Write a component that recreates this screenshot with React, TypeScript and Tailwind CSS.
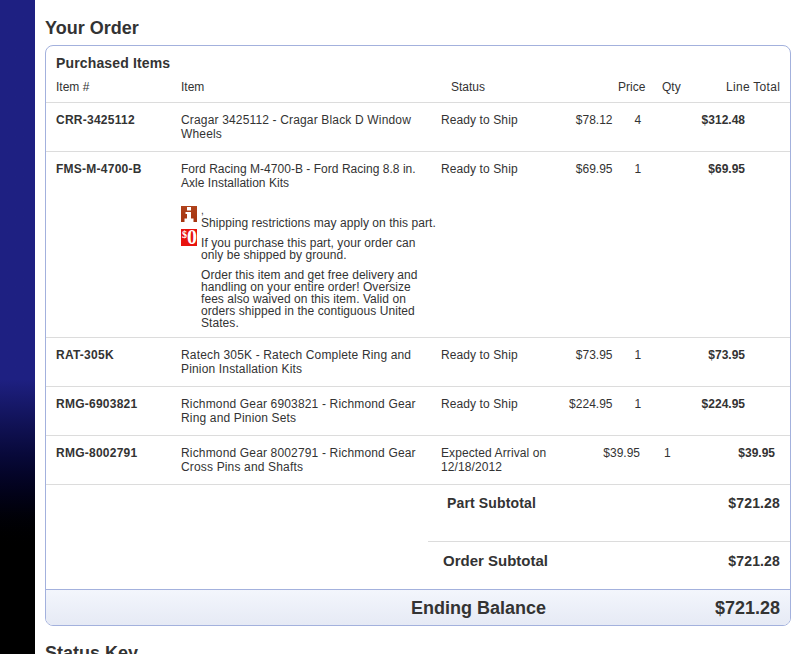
const font = { fontFamily: '"Liberation Sans", Arial, sans-serif' };

interface Item {
  sku: string;
  name: string[];
  status: string[];
  price: string;
  qty: string;
  total: string;
  late?: boolean;
}

const items: Item[] = [
  {
    sku: "CRR-3425112",
    name: ["Cragar 3425112 - Cragar Black D Window", "Wheels"],
    status: ["Ready to Ship"],
    price: "$78.12",
    qty: "4",
    total: "$312.48",
  },
  {
    sku: "FMS-M-4700-B",
    name: ["Ford Racing M-4700-B - Ford Racing 8.8 in.", "Axle Installation Kits"],
    status: ["Ready to Ship"],
    price: "$69.95",
    qty: "1",
    total: "$69.95",
  },
  {
    sku: "RAT-305K",
    name: ["Ratech 305K - Ratech Complete Ring and", "Pinion Installation Kits"],
    status: ["Ready to Ship"],
    price: "$73.95",
    qty: "1",
    total: "$73.95",
  },
  {
    sku: "RMG-6903821",
    name: ["Richmond Gear 6903821 - Richmond Gear", "Ring and Pinion Sets"],
    status: ["Ready to Ship"],
    price: "$224.95",
    qty: "1",
    total: "$224.95",
  },
  {
    sku: "RMG-8002791",
    name: ["Richmond Gear 8002791 - Richmond Gear", "Cross Pins and Shafts"],
    status: ["Expected Arrival on", "12/18/2012"],
    price: "$39.95",
    qty: "1",
    total: "$39.95",
    late: true,
  },
];

function ShippingNotes() {
  return (
    <div className="mt-[15px] flex">
      <div className="w-[20px] shrink-0">
        <div className="mt-[1px] h-[16px] w-[16px] bg-gradient-to-b from-[#b0431c] to-[#a5330f]">
          <svg viewBox="0 0 16 16" className="h-[16px] w-[16px]">
            <rect x="6" y="1" width="4" height="3.5" fill="#fff" />
            <path d="M4.5 6H10V12.5H12.5V16H3.5V12.5H6V8H4.5Z" fill="#fff" />
          </svg>
        </div>
        <div className="mt-[7px] flex h-[17px] w-[16px] items-start overflow-hidden bg-[#e8120e] pl-[1px] font-bold text-white [font-family:'Liberation_Serif',serif]">
          <span className="w-[5px] text-[10px] leading-[11px]">$</span>
          <span className="text-[20px] leading-[17px]">0</span>
        </div>
      </div>
      <div className="tracking-[0.06px]">
        <div className="h-[11px] text-[10px] leading-[12px]">,</div>
        <p className="relative top-[1px] leading-[13px]">Shipping restrictions may apply on this part.</p>
        <p className="mt-[8px] leading-[12px]">
          If you purchase this part, your order can
          <br />
          only be shipped by ground.
        </p>
        <p className="mt-[8px] leading-[12px]">
          Order this item and get free delivery and
          <br />
          handling on your entire order! Oversize
          <br />
          fees also waived on this item. Valid on
          <br />
          orders shipped in the contiguous United
          <br />
          States.
        </p>
      </div>
    </div>
  );
}

function ItemRow({ item, notes }: { item: Item; notes?: boolean }) {
  return (
    <div className={`flex border-t border-[#dcdcdc] pl-[10px] pt-[10px] leading-[14px] ${notes ? "pb-[8px]" : "h-[49px]"}`}>
      <div className="w-[125px] shrink-0 font-bold tracking-[0.25px]">{item.sku}</div>
      <div className={`w-[260px] shrink-0 ${notes ? "tracking-[0.03px]" : "tracking-[0.16px]"}`}>
        {item.name.map((line) => (
          <div key={line}>{line}</div>
        ))}
        {notes && <ShippingNotes />}
      </div>
      <div className="w-[120px] shrink-0 tracking-[0.1px]">
        {item.status.map((line) => (
          <div key={line}>{line}</div>
        ))}
      </div>
      <div className={`shrink-0 text-right ${item.late ? "w-[79px]" : "w-[51.5px]"}`}>{item.price}</div>
      <div className={`shrink-0 ${item.late ? "w-[24px] pl-[24px]" : "w-[22.5px] pl-[22px]"}`}>{item.qty}</div>
      <div className={`shrink-0 text-right font-bold ${item.late ? "w-[111px]" : "w-[110px]"}`}>{item.total}</div>
    </div>
  );
}

export default function App() {
  return (
    <div
      className="flex h-[654px] w-[811px] overflow-hidden bg-white text-[12px] text-[#333]"
      style={font}
    >
      <div className="h-full w-[35px] shrink-0 bg-gradient-to-b from-[#1e2082] from-[58%] to-black to-[85%]" />
      <div className="ml-[10px] w-[746px] shrink-0">
        <h1 className="pt-[18px] text-[18px] font-bold leading-[20px] text-[#333]">Your Order</h1>
        <div className="mt-[7px] overflow-hidden rounded-[8px] border border-[#a3b1dd]">
          <h2 className="pl-[10px] pt-[9px] text-[14px] font-bold leading-[16px] tracking-[0.15px]">Purchased Items</h2>
          <div className="relative flex h-[31px] pl-[10px] pt-[9px] leading-[14px]">
            <div className="w-[125px] shrink-0">Item #</div>
            <div className="w-[270px] shrink-0">Item</div>
            <div className="w-[167px] shrink-0">Status</div>
            <div className="w-[44px] shrink-0">Price</div>
            <div className="w-[64px] shrink-0">Qty</div>
            <div className="tracking-[0.3px]">Line Total</div>
          </div>
          {items.map((item, i) => (
            <ItemRow key={item.sku} item={item} notes={i === 1} />
          ))}
          <div className="h-[57px] border-t border-[#dcdcdc]">
            <div className="flex justify-between pl-[401px] pr-[10px] pt-[10px] text-[14px] font-bold leading-[16px] tracking-[0.15px]">
              <span>Part Subtotal</span>
              <span>$721.28</span>
            </div>
          </div>
          <div className="ml-[382px] flex h-[48px] items-start justify-between border-t border-[#dcdcdc] pl-[15px] pr-[10px] pt-[11px] font-bold leading-[16px]">
            <span className="text-[15px]">Order Subtotal</span>
            <span className="text-[14px] tracking-[0.15px]">$721.28</span>
          </div>
          <div className="flex h-[36px] justify-between border-t border-[#a3b1dd] bg-gradient-to-b from-[#f3f6fc] to-[#e6eaf5] pl-[365px] pr-[10px] pt-[8px] text-[18px] font-bold leading-[20px]">
            <span>Ending Balance</span>
            <span>$721.28</span>
          </div>
        </div>
        <h1 className="mt-[17px] text-[18px] font-bold leading-[20px] text-[#333]">Status Key</h1>
      </div>
    </div>
  );
}
